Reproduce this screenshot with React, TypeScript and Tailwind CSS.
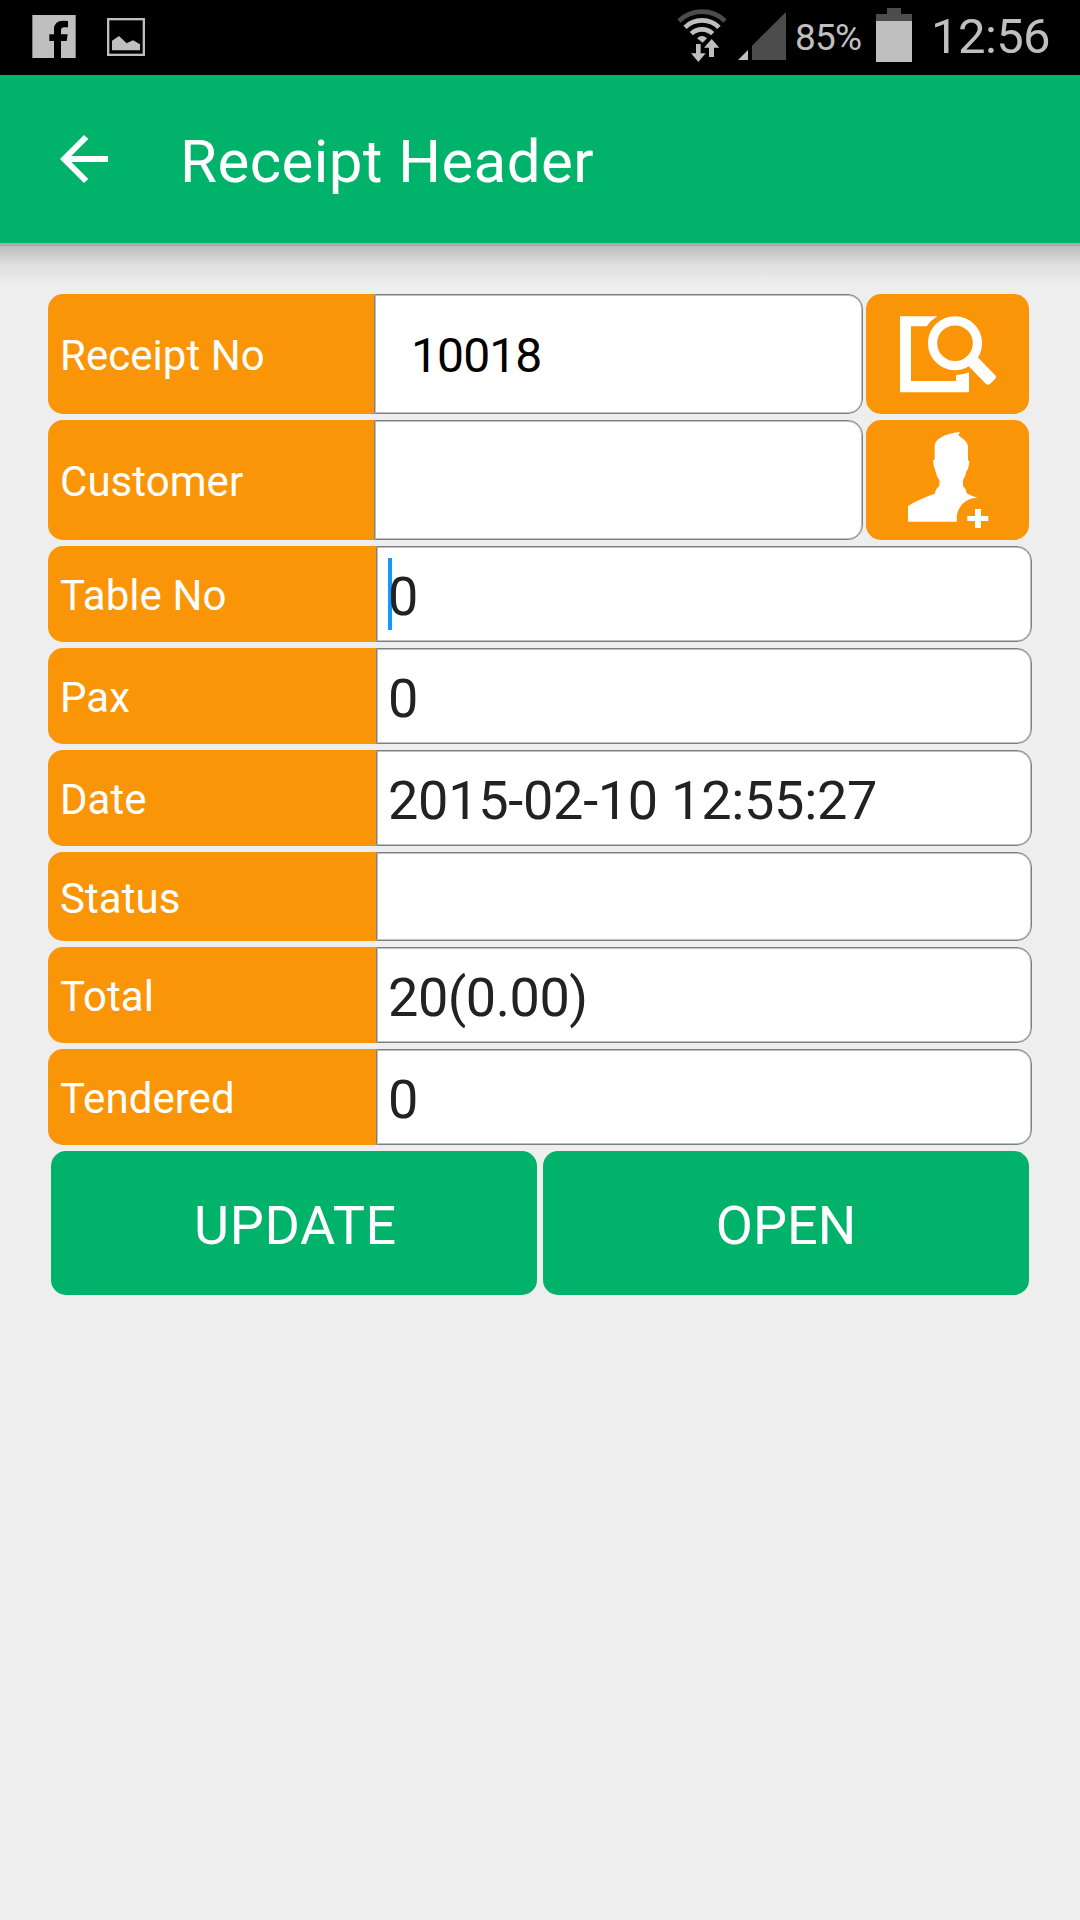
import React from "react";

interface Field {
  label: string;
  value: string;
  height: string;
  tracking?: string;
  focused?: boolean;
}

const fields: Field[] = [
  { label: "Table No", value: "0", height: "h-24", focused: true },
  { label: "Pax", value: "0", height: "h-24" },
  { label: "Date", value: "2015-02-10 12:55:27", height: "h-24", tracking: "tracking-[-0.27px]" },
  { label: "Status", value: "", height: "h-[89px]" },
  { label: "Total", value: "20(0.00)", height: "h-24", tracking: "tracking-[-0.45px]" },
  { label: "Tendered", value: "0", height: "h-24" },
];

const inputBox =
  "flex items-center bg-white border border-[#7f7f7f] rounded-r-[15px] shadow-[inset_0_0_0_1px_#c0c0c0] whitespace-nowrap";

function StatusBar() {
  return (
    <div className="flex h-[75px] bg-black text-[#bfbfbf]">
      <svg className="ml-8 mt-[15px] w-11 h-[43px] shrink-0" viewBox="96 45 132 129">
        <path
          fill="#bfbfbf"
          d="M97 45H227V174H183V123H200L203 103H183V92Q183 82 193 82H204V63Q198 62 190 62Q162 62 162 88V103H148V123H162V174H97Z"
        />
      </svg>
      <svg className="ml-[31px] mt-[18px] w-[38px] h-[38px] shrink-0" viewBox="321 54 114 114">
        <rect x="324.5" y="57.5" width="107" height="107" fill="none" stroke="#bfbfbf" strokeWidth="7" />
        <path fill="#bfbfbf" d="M336 151V122L357 108L380 130L399 121L420 133V151Z" />
      </svg>
      <svg className="ml-[532px] w-[110px] h-[75px] shrink-0" viewBox="51 0 330 225">
        <g fill="none" strokeWidth="14">
          <path stroke="#4c4c4c" d="M57 63A99 99 0 0 1 195 63" />
          <path stroke="#bfbfbf" d="M75 82A73 73 0 0 1 177 82" />
          <path stroke="#bfbfbf" d="M94 101A46 46 0 0 1 158 101" />
        </g>
        <path fill="#bfbfbf" d="M111 115Q126 101 141 115L128 128Z" />
        <path fill="#bfbfbf" d="M108 132H122V160H137L115 186L93 160H108Z" />
        <path
          fill="#bfbfbf"
          stroke="#000"
          strokeWidth="5"
          paintOrder="stroke"
          d="M155 117L178 143H162V171H147V143H132Z"
        />
        <path fill="#bfbfbf" d="M234 180L264 150V180Z" />
        <path fill="#4c4c4c" d="M276 180V137L378 36V180Z" />
      </svg>
      <span className="ml-2 mt-[15px] w-[66px] shrink-0 text-[37px] leading-[46px] tracking-[-0.8px]">85%</span>
      <svg className="ml-[15px] mt-2 w-9 h-[54px] shrink-0" viewBox="0 0 36 54">
        <path fill="#4c4c4c" d="M11 0H25V6H36V13H0V6H11Z" />
        <path fill="#bfbfbf" d="M0 13H36V54H0Z" />
      </svg>
      <span className="ml-[19px] mt-[7px] text-[49px] leading-[60px] tracking-[-0.6px]">12:56</span>
    </div>
  );
}

function Header() {
  return (
    <header className="flex items-center h-[168px] bg-[#00b26a] text-white">
      <svg className="ml-[60px] w-12 h-12" viewBox="180 405 144 144">
        <path
          fill="#fff"
          d="M180 477L252 405L265 417L214 468H324V486H214L265 537L252 549Z"
        />
      </svg>
      <h1 className="ml-[72px] pt-[5px] text-[60px] leading-[72px] tracking-[0.42px]">Receipt Header</h1>
    </header>
  );
}

function SearchIcon() {
  return (
    <svg className="w-[163px] h-[120px]" viewBox="0 0 163 120">
      <path
        fill="#fff"
        d="M34 22.3H71.3A32 32 0 0 0 60.7 32.3H45V87H90V81Q97 81 103 78.3V98.3H34Z"
      />
      <circle cx="89" cy="49.2" r="22.4" fill="none" stroke="#fff" strokeWidth="9.2" />
      <path
        fill="#fff"
        d="M103 72.5L112 63.5L129.4 81.5Q130.8 83 129.4 84.5L124.3 89.8Q122 91.5 119.8 89.8Z"
      />
    </svg>
  );
}

function AddUserIcon() {
  return (
    <svg className="w-[163px] h-[120px]" viewBox="18 30 489 360">
      <path
        fill="#fff"
        d="M144 335V288Q170 270 224 251Q228 234 236 230Q240 224 238 211Q229 198 226 182Q219 166 219 150L224 149V107Q228 75 300 66L295 76L314 91Q324 100 324 109V151L328 153Q326 178 319 184Q317 200 309 210V229Q317 234 320 250Q334 258 353 263A62 62 0 0 0 291 335Z"
      />
      <path fill="#fff" d="M345 297H363V318H385V333H363V354H345V333H322V318H345Z" />
    </svg>
  );
}

function Label({ text, width }: { text: string; width: string }) {
  return (
    <div
      className={`${width} flex items-center shrink-0 rounded-l-[15px] bg-[#fa9508] pl-3 pt-[3px] text-[42px] tracking-[0.05px] text-white`}
    >
      {text}
    </div>
  );
}

export default function App() {
  return (
    <div className="w-[1080px] h-[1920px] overflow-hidden bg-[#eeeeee] font-[Roboto,sans-serif]">
      <StatusBar />
      <Header />
      <div className="h-[3px] bg-[#a9a9a9]" />
      <div className="h-12 bg-linear-to-b from-[#bdbdbd] via-[#dfdfdf] via-40% to-[#eeeeee] to-80%" />

      <main className="flex flex-col gap-1.5 pl-12">
        <div className="flex h-[120px]">
          <Label text="Receipt No" width="w-[326px]" />
          <div className={`${inputBox} w-[489px] pl-[36px] pt-[3px] text-[48px] tracking-[-0.9px] text-black`}>10018</div>
          <button className="ml-[3px] rounded-[15px] bg-[#fa9508]">
            <SearchIcon />
          </button>
        </div>
        <div className="flex h-[120px]">
          <Label text="Customer" width="w-[326px]" />
          <div className={`${inputBox} w-[489px]`} />
          <button className="ml-[3px] rounded-[15px] bg-[#fa9508]">
            <AddUserIcon />
          </button>
        </div>

        {fields.map((f) => (
          <div key={f.label} className={`${f.height} flex`}>
            <Label text={f.label} width="w-[328px]" />
            <div className={`${inputBox} relative w-[656px] pl-[11px] pt-1 text-[54px] text-[#222222]`}>
              {f.focused && <span className="absolute left-[11px] top-[11px] w-1 h-[72px] bg-[#1499ff]" />}
              <span className={`relative ${f.tracking ?? ""}`}>{f.value}</span>
            </div>
          </div>
        ))}

        <div className="flex gap-1.5 pl-[3px] text-[54px] text-white">
          <button className="w-[486px] h-36 rounded-[15px] bg-[#00b26a] pt-1 pl-[3px] tracking-[0.7px]">UPDATE</button>
          <button className="w-[486px] h-36 rounded-[15px] bg-[#00b26a] pt-1">OPEN</button>
        </div>
      </main>
    </div>
  );
}
